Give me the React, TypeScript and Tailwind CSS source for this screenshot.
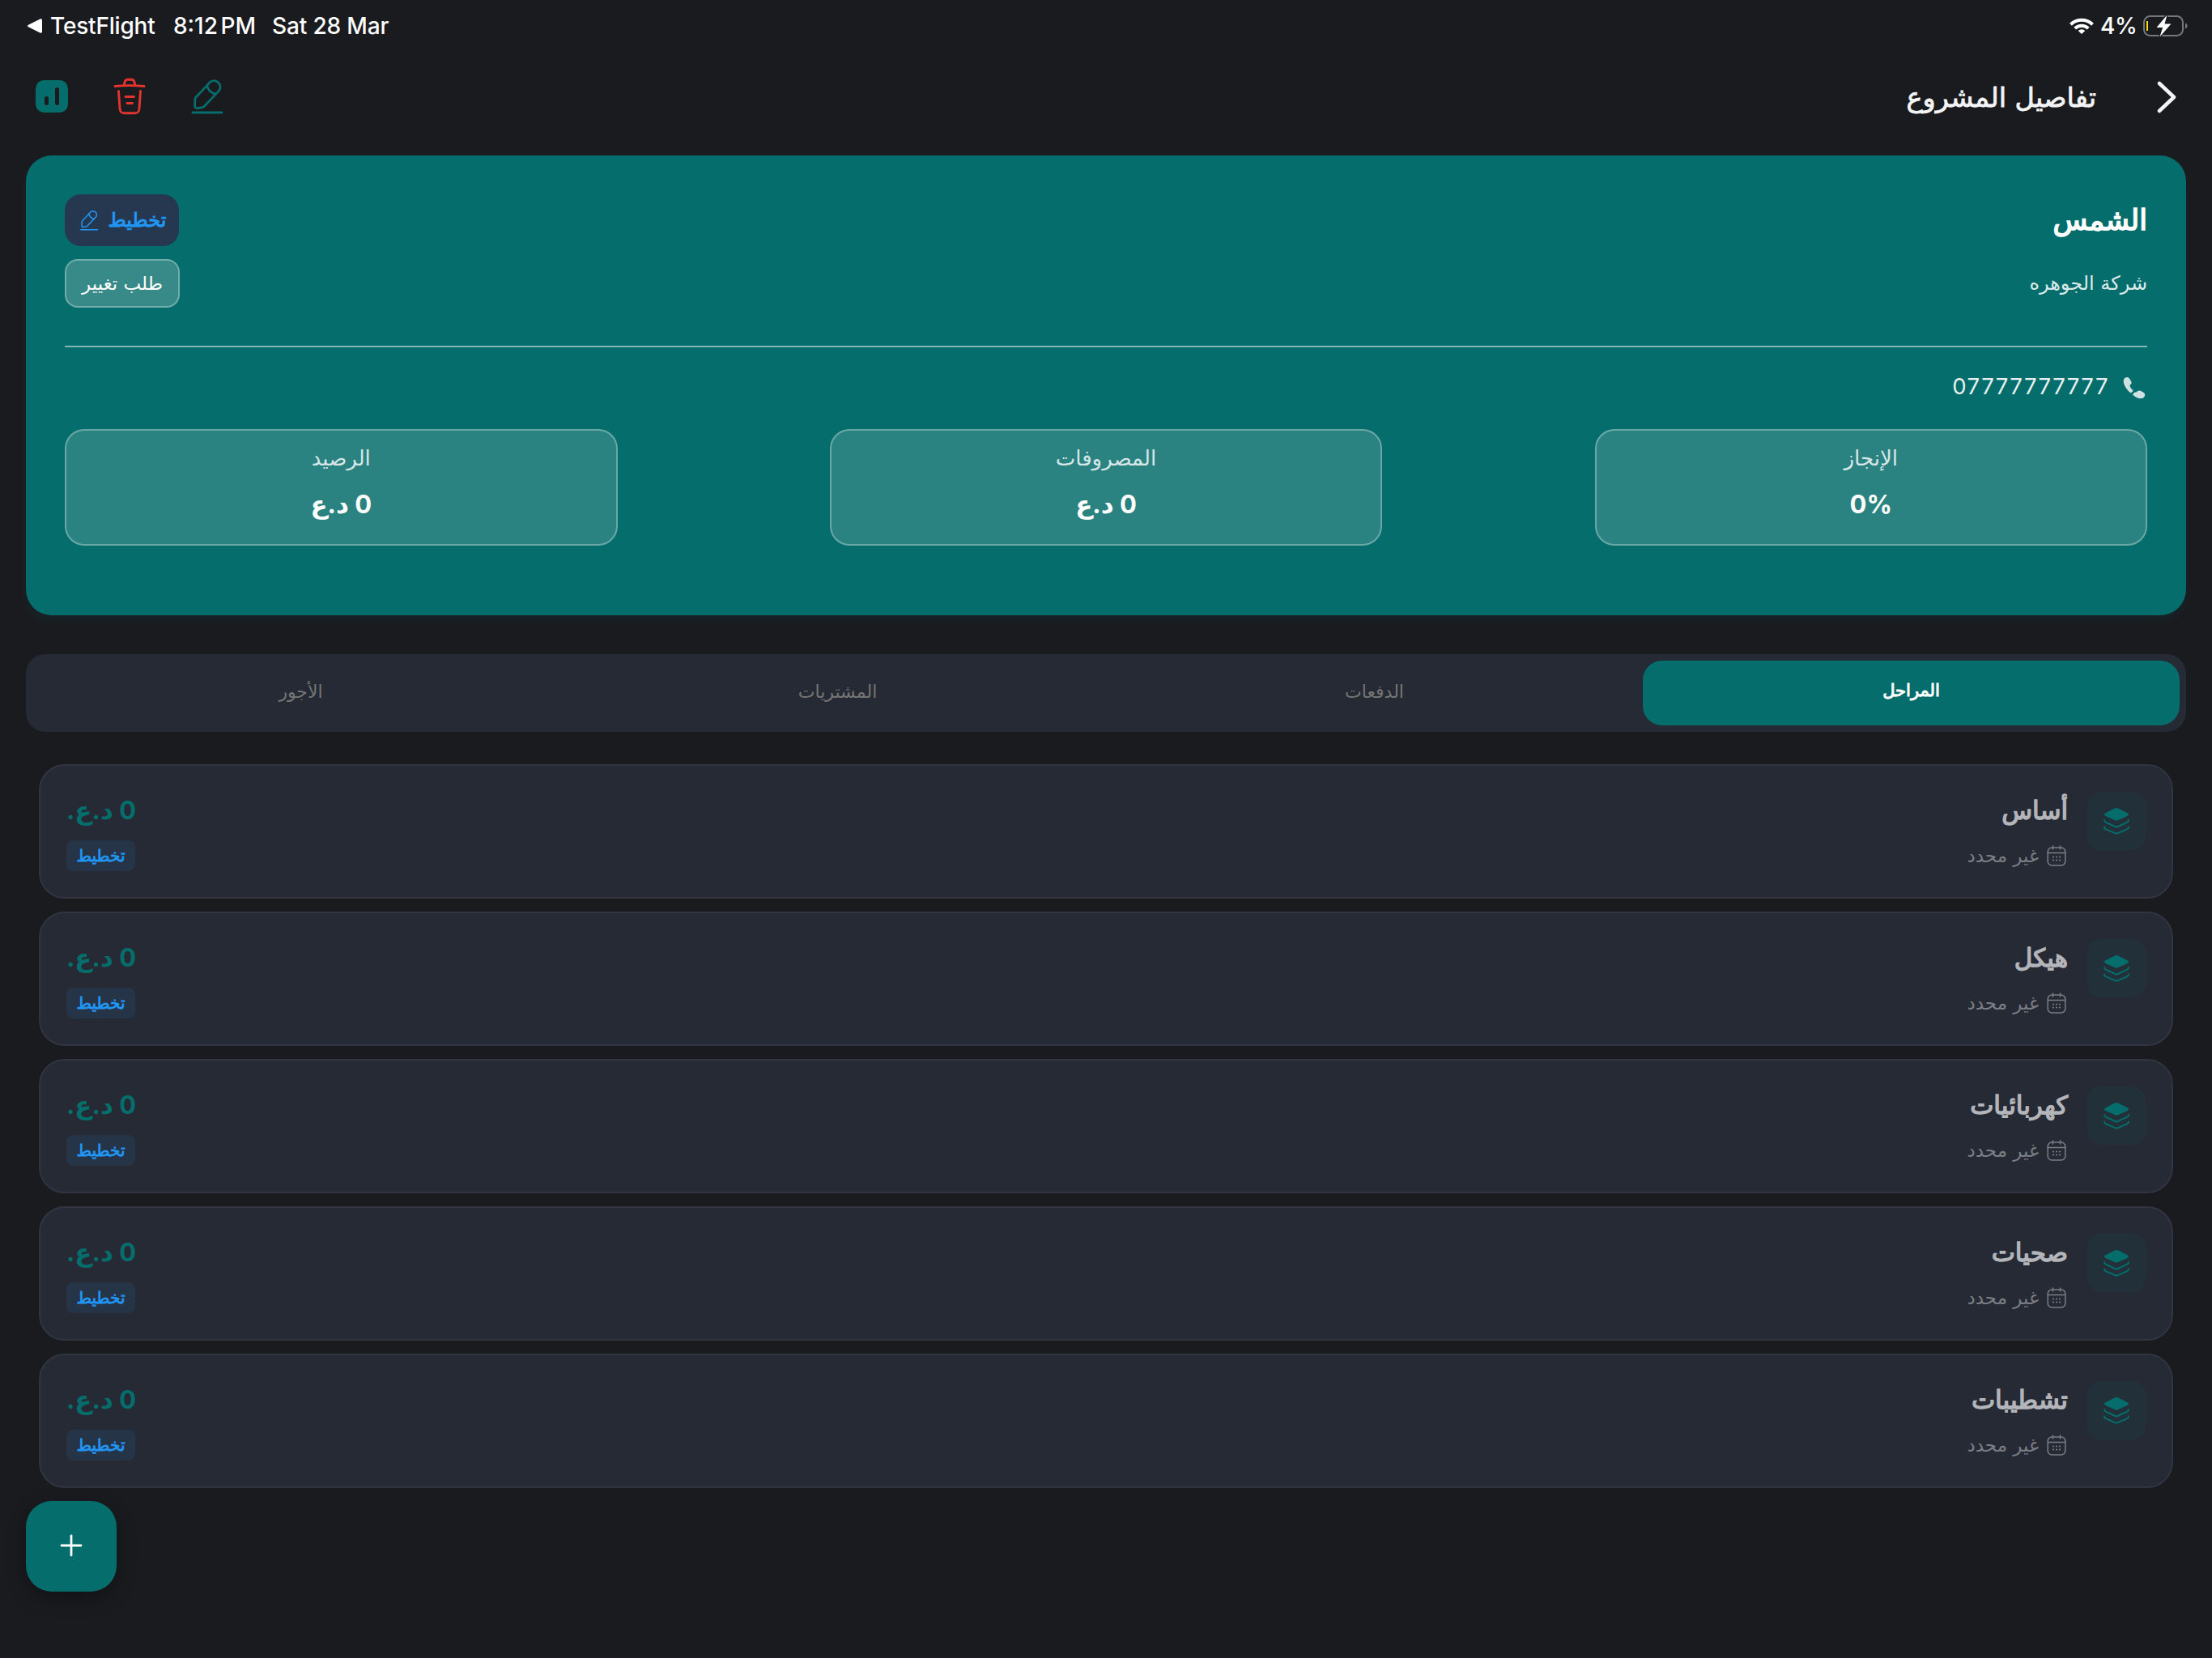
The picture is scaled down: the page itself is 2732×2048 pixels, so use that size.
import type { ReactNode } from "react";

const stages = ["أساس", "هيكل", "كهربائيات", "صحيات", "تشطيبات"];

const tabs = [
  { label: "المراحل", active: true },
  { label: "الدفعات", active: false },
  { label: "المشتريات", active: false },
  { label: "الأجور", active: false },
];

function PenIcon({ className, strokeWidth = 1.5 }: { className?: string; strokeWidth?: number }) {
  return (
    <svg viewBox="0 0 24 24" fill="none" stroke="currentColor" strokeWidth={strokeWidth} strokeLinecap="round" strokeLinejoin="round" className={className}>
      <path d="M3 22h18" />
      <path d="M4.700 12.900 13.600 3.400a3.600 3.600 0 0 1 5.100 0l.3.300a3.600 3.600 0 0 1 0 5.100L10.300 18c-.5.500-1 .8-1.700.9l-2.700.4c-.9.1-1.700-.6-1.600-1.500l.1-3.300c0-.6 0-1.100.3-1.600z" />
      <path d="M11.900 5.300c.4 2.700 2.500 4.800 5.200 5.200" />
    </svg>
  );
}

function TrashIcon() {
  return (
    <svg viewBox="0 0 40 46" fill="none" stroke="currentColor" strokeWidth="2.900" strokeLinecap="round" strokeLinejoin="round" className="w-10 h-[46px]">
      <path d="M2 10.500c12-1.200 24-1.200 36 0" />
      <path d="M13.300 9.400l.6-3.700c.4-2.200 1.300-3.500 4-3.500h4.200c2.700 0 3.600 1.300 4 3.500l.6 3.700" />
      <path d="M6.500 16.500l1.500 21.500c.3 4 1.200 5.700 5.400 5.700h13.200c4.200 0 5.100-1.700 5.400-5.700l1.500-21.500" />
      <path d="M15 23.500h10.500" />
      <path d="M17 31.500h6.500" />
    </svg>
  );
}

function ChartIcon() {
  return (
    <svg viewBox="0 0 40 40" className="w-10 h-10">
      <rect width="40" height="40" rx="10.500" fill="#056d6b" />
      <path d="M13.500 22.500v6M26.500 11.500v17" stroke="#1a1b1f" strokeWidth="5" strokeLinecap="round" />
    </svg>
  );
}

function LayersIcon() {
  return (
    <svg viewBox="0 0 34 34" fill="none" stroke="#056d6b" strokeWidth="2" strokeLinecap="round" strokeLinejoin="round" className="w-[34px] h-[34px]">
      <path d="M3.500 7.200 14.800 1.500c1.500-.8 2.900-.8 4.400 0l11.300 5.700c2 1 2 2.700 0 3.700l-11.300 5c-1.500.7-2.900.7-4.400 0l-11.300-5c-2-1-2-2.700 0-3.700z" fill="#056d6b" stroke="none" />
      <path d="M2 16c0 1.400.9 2.200 2.200 2.800L15.200 24c1.200.6 2.400.6 3.600 0l11-5.200c1.300-.6 2.200-1.400 2.200-2.800" />
      <path d="M2 24.500c0 1.400.9 2.200 2.200 2.800l11 4.800c1.200.6 2.400.6 3.600 0l11-4.800c1.300-.6 2.200-1.400 2.200-2.800" />
    </svg>
  );
}

function CalendarIcon() {
  return (
    <svg viewBox="0 0 24 26" fill="none" stroke="currentColor" strokeWidth="1.500" strokeLinecap="round" className="w-6 h-[26px]">
      <rect x="1.200" y="3" width="21.600" height="22" rx="5" />
      <path d="M1.200 9.500h21.600M7.500 1v4M16.500 1v4" />
      <path d="M8 14.500h.01M12 14.500h.01M16 14.500h.01M8 18.500h.01M12 18.500h.01M16 18.500h.01" strokeWidth="2.200" />
    </svg>
  );
}

function PhoneIcon() {
  return (
    <svg viewBox="0 0 28 28" fill="#cfe2e1" className="w-7 h-7">
      <path d="M1.300 3.200C2.500 1.400 4.900.3 6.800 1.500c1.400.9 3.900 4.800 3.900 6.500 0 1.600-2.200 2-2.200 3.400 0 1.500 2.200 4.200 3.700 5.400.5.400.5.900.1 1.300l-1.900 1.800c-.4.400-.9.400-1.300.1C4.800 16.500 1 10.800.7 6.200c-.1-1.100.1-2.200.6-3z" />
      <path d="M12.300 21.700l2-2c.3-.3.700-.4 1.100-.2 1.200.5 2-1.300 3.600-1.800 2.300-.7 6.300 1.700 7.500 3.100 1.500 1.900.4 4.500-1.500 5.800-3.900 2.200-9.200-.7-12.700-3.900-.3-.3-.3-.7 0-1z" />
    </svg>
  );
}

function StatusBar() {
  return (
    <div dir="ltr" className="flex h-16 items-center justify-between pl-[34px] pr-[29px] font-['Inter',sans-serif] text-[28px] font-medium text-white">
      <div className="flex items-center">
        <svg viewBox="0 0 18 18" className="w-[18px] h-[18px]">
          <path d="M1 7.800 15.500.6C17 0 18 .6 18 2v14c0 1.400-1 2-2.500 1.400L1 10.200c-1.200-.7-1.200-1.700 0-2.400z" fill="#fff" />
        </svg>
        <span className="ml-2.5 w-[152px] tracking-[-0.2px]">TestFlight</span>
        <span className="w-[122px] [word-spacing:-4px]">8:12 PM</span>
        <span className="tracking-[-0.15px]">Sat 28 Mar</span>
      </div>
      <div className="flex items-center">
        <svg viewBox="0 0 30 20" fill="none" stroke="#fff" strokeWidth="4" className="w-[30px] h-5">
          <path d="M1.500 8.200a19.500 19.500 0 0 1 27 0" />
          <path d="M6.700 13a12 12 0 0 1 16.600 0" />
          <path d="M15 20l-4.300-4.100a6.300 6.300 0 0 1 8.600 0z" fill="#fff" stroke="none" />
        </svg>
        <span className="ml-2 w-[53px] tracking-[-0.5px]">4%</span>
        <svg viewBox="0 0 56 28" className="w-14 h-7">
          <rect x="1" y="2" width="48" height="24" rx="7.500" fill="none" stroke="#76777a" strokeWidth="2" />
          <path d="M52 10.500c3.500 1 3.500 6 0 7z" fill="#76777a" />
          <rect x="4" y="8" width="2" height="12" fill="#ffd60a" />
          <path d="M29.500.5 16.500 16h7.700L20.500 27.500 34.500 11.500h-8z" fill="#fff" stroke="#1a1b1f" strokeWidth="2.500" paintOrder="stroke" />
        </svg>
      </div>
    </div>
  );
}

function Header() {
  return (
    <header className="flex h-32 items-center justify-between pb-[18px] pl-[44px] pr-[43px]">
      <div className="flex items-center gap-[74px] pt-0.5">
        <svg viewBox="0 0 26 40" fill="none" stroke="#f4f4f6" strokeWidth="4.500" strokeLinecap="round" strokeLinejoin="round" className="w-[26px] h-10">
          <path d="M4 3l18 17L4 37" />
        </svg>
        <h1 className="pt-0.5 text-[33.5px] leading-[56px] text-[#f4f4f6] [-webkit-text-stroke:0.8px_#f4f4f6]">تفاصيل المشروع</h1>
      </div>
      <div dir="ltr" className="flex items-center">
        <ChartIcon />
        <div className="ml-[56px] text-[#e5342f]">
          <TrashIcon />
        </div>
        <PenIcon className="ml-[52px] w-12 h-12 text-[#056d6b]" strokeWidth={1.400} />
      </div>
    </header>
  );
}

function Stat({ label, children }: { label: string; children: ReactNode }) {
  return (
    <div className="flex h-36 w-[682.5px] flex-col items-center rounded-3xl border-2 border-white/30 bg-white/15 pt-3">
      <span className="text-[26px] leading-[45px] text-[#d6e6e6]">{label}</span>
      <span className="mt-2 font-['Inter','DejaVu_Sans',sans-serif] text-[31px] leading-[52px] font-bold text-white">{children}</span>
    </div>
  );
}

function ProjectCard() {
  return (
    <section className="mx-8 h-[568px] rounded-[32px] bg-[#056d6b] px-12 pt-12 shadow-[0_8px_8px_rgba(6,109,107,0.1)]">
      <div className="flex h-[187px] justify-between">
        <div>
          <h2 className="text-[35px] leading-[64px] text-white [-webkit-text-stroke:1.600px_white]">الشمس</h2>
          <p className="mt-4 text-[24px] leading-[61px] text-[#dceaea]">شركة الجوهره</p>
        </div>
        <div className="flex flex-col items-end gap-4">
          <div className="flex h-16 w-[141px] items-center justify-center gap-2.5 rounded-[20px] bg-[#263850] text-[#2196f3]">
            <span className="text-[24px] [-webkit-text-stroke:1px_#2196f3]">تخطيط</span>
            <PenIcon className="w-7 h-7" strokeWidth={1.300} />
          </div>
          <div className="flex h-[60px] w-[142px] items-center justify-center rounded-2xl border-2 border-white/30 bg-white/20 text-[23px] text-white">
            طلب تغيير
          </div>
        </div>
      </div>
      <div className="h-0.5 bg-[#82b6b5]"></div>
      <div className="mt-6 flex h-[52px] items-center gap-[17px] pr-0.5">
        <PhoneIcon />
        <span dir="ltr" className="pb-0.5 font-['Inter',sans-serif] text-[27.5px] tracking-[1.500px] text-[#e6f0f0]">07777777777</span>
      </div>
      <div className="mt-[25px] flex justify-between">
        <Stat label="الإنجاز"><span dir="ltr">0%</span></Stat>
        <Stat label="المصروفات">0 د.ع</Stat>
        <Stat label="الرصيد">0 د.ع</Stat>
      </div>
    </section>
  );
}

function Tabs() {
  return (
    <nav className="mx-8 mt-12 flex h-24 rounded-3xl bg-[#252a34] p-2">
      {tabs.map((tab) => (
        <div
          key={tab.label}
          className={
            tab.active
              ? "flex flex-1 items-center justify-center rounded-3xl bg-[#056d6b] pb-1 text-[21px] text-white [-webkit-text-stroke:1px_white]"
              : "flex flex-1 items-center justify-center pb-1 text-[22px] text-[#757575]"
          }
        >
          {tab.label}
        </div>
      ))}
    </nav>
  );
}

function StageCard({ name }: { name: string }) {
  return (
    <li className="flex h-[166px] justify-between rounded-[32px] border-2 border-[#303541] bg-[#252a34] p-8">
      <div className="flex gap-6">
        <div className="flex h-[72px] w-[72px] items-center justify-center rounded-2xl bg-[#22303a]">
          <LayersIcon />
        </div>
        <div>
          <h3 className="text-[31px] leading-[46px] text-[#b3b5ba] [-webkit-text-stroke:1.400px_#b3b5ba]">{name}</h3>
          <div className="mt-3.5 flex h-[38px] items-center gap-2.5 pr-0.5 text-[#7b7e85]">
            <CalendarIcon />
            <span className="text-[23px]">غير محدد</span>
          </div>
        </div>
      </div>
      <div className="flex flex-col items-end">
        <span className="font-['Inter','DejaVu_Sans',sans-serif] text-[31px] leading-[46px] font-bold text-[#056d6b]">0 د.ع.</span>
        <span className="mt-3.5 flex h-[38px] w-[85px] items-center justify-center rounded-lg bg-[#253446] text-[20px] text-[#2196f3] [-webkit-text-stroke:0.8px_#2196f3]">تخطيط</span>
      </div>
    </li>
  );
}

export default function App() {
  return (
    <div dir="rtl" className="h-[2048px] w-[2732px] overflow-hidden bg-[#1a1b1f] font-['DejaVu_Sans',sans-serif]">
      <StatusBar />
      <Header />
      <ProjectCard />
      <Tabs />
      <ul className="mx-12 mt-10 flex flex-col gap-4">
        {stages.map((name) => (
          <StageCard key={name} name={name} />
        ))}
      </ul>
      {/* Add button */}
      <div className="mt-4 flex justify-end px-8">
        <button className="flex h-28 w-28 items-center justify-center rounded-[32px] bg-[#056d6b] pb-0.5 shadow-[0_8px_24px_rgba(0,0,0,0.3)]">
          <svg viewBox="0 0 28 28" stroke="#fff" strokeWidth="2.800" strokeLinecap="round" className="w-7 h-7">
            <path d="M14 2v24M2 14h24" />
          </svg>
        </button>
      </div>
    </div>
  );
}
